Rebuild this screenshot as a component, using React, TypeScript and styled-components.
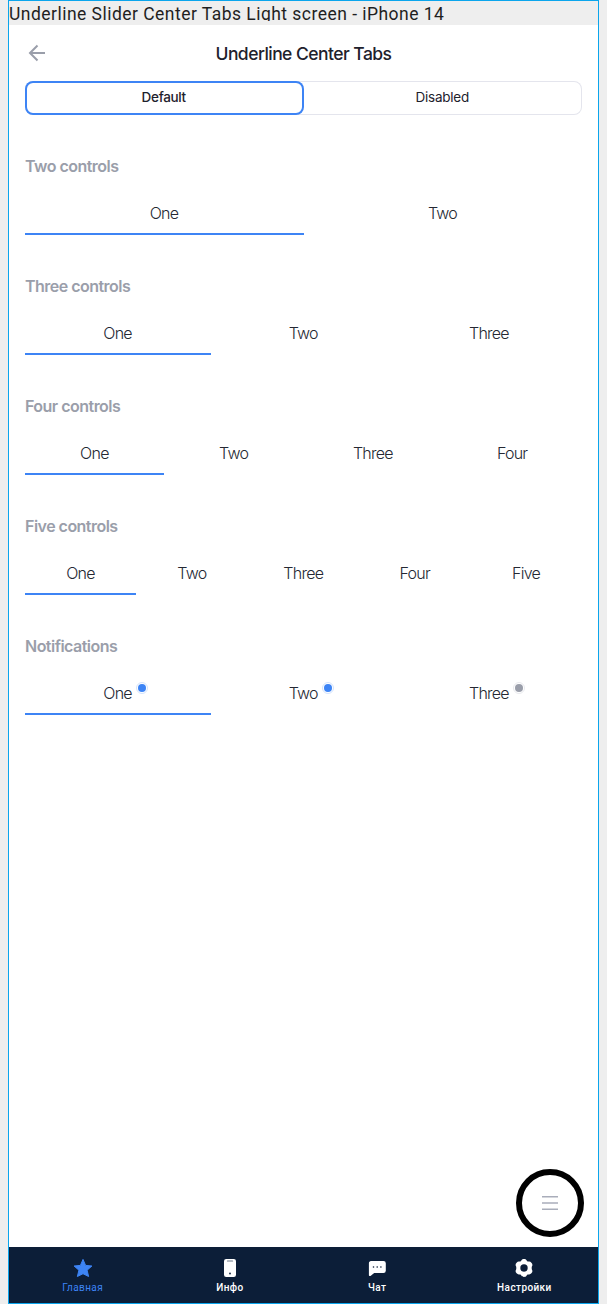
import React from "react";
import styled, { createGlobalStyle } from "styled-components";

const GlobalStyle = createGlobalStyle`
  *, *::before, *::after { box-sizing: border-box; }
  body { margin: 0; background: #eeeeee; font-family: Inter, "Liberation Sans", sans-serif; }
`;

const Canvas = styled.div`
  height: 1304px;
  padding-left: 8px;
  background: #eeeeee;
`;

const Frame = styled.div`
  position: relative;
  display: flex;
  flex-direction: column;
  width: 591px;
  height: 1304px;
  border: 1px solid #0ba5ec;
  background: #fff;
`;

const FrameTitle = styled.div`
  height: 24px;
  background: #eeeeee;
  color: #1f1f1f;
  overflow: hidden;
`;

const FrameTitleText = styled.div`
  height: 20px;
  overflow: hidden;
  font: 400 17.5px/26px Roboto, sans-serif;
  letter-spacing: 0.47px;
  white-space: nowrap;
`;

const Header = styled.header`
  display: grid;
  grid-template-columns: 24px 1fr 24px;
  align-items: center;
  height: 56px;
  padding: 0 16px;
`;

const Heading = styled.h1`
  margin: 1px 0 0;
  text-align: center;
  color: #1e212c;
  font-size: 17.5px;
  line-height: 23px;
  font-weight: 500;
  letter-spacing: -0.54px;
`;

const Segments = styled.div`
  display: grid;
  grid-template-columns: 1fr 1fr;
  height: 34px;
  margin: 0 16px;
  border-radius: 8px;
  box-shadow: inset 0 0 0 1px #e4e5ed;
`;

const Segment = styled.div<{ $active?: boolean }>`
  display: flex;
  align-items: center;
  justify-content: center;
  padding: 0 1px 2px 0;
  border-radius: 8px;
  box-shadow: ${(p) => (p.$active ? "inset 0 0 0 2px #3d84f5" : "none")};
  color: #1e212c;
  font-size: 13.5px;
  font-weight: ${(p) => (p.$active ? 500 : 400)};
  letter-spacing: ${(p) => (p.$active ? "-0.32px" : "-0.25px")};
`;

const Content = styled.main`
  flex: 1;
  padding: 39px 16px 0;
`;

const Section = styled.section`
  height: 120px;
`;

const SectionTitle = styled.h2`
  margin: 0;
  color: #9a9eaa;
  font-size: 16px;
  line-height: 24px;
  font-weight: 600;
  letter-spacing: -0.52px;
`;

const Tabs = styled.div`
  display: flex;
  margin-top: 12px;
`;

const Tab = styled.div<{ $active?: boolean }>`
  display: flex;
  flex: 1 1 0;
  justify-content: center;
  height: 45px;
  padding: 11px 0.5px 0 0;
  border-bottom: 2px solid ${(p) => (p.$active ? "#3d84f5" : "transparent")};
  color: #252833;
  font-size: 16px;
  line-height: 24px;
  font-weight: 300;
  letter-spacing: -0.75px;
`;

const TabLabel = styled.span`
  position: relative;
`;

const Dot = styled.span<{ $color: string; $ring: string }>`
  position: absolute;
  left: calc(100% + 4px);
  top: 1px;
  width: 12px;
  height: 12px;
  padding: 1px;
  border: 1px solid ${(p) => p.$ring};
  border-radius: 50%;

  &::before {
    content: "";
    display: block;
    width: 8px;
    height: 8px;
    border-radius: 50%;
    background: ${(p) => p.$color};
  }
`;

const MenuButton = styled.button`
  position: absolute;
  right: 14px;
  bottom: 66px;
  display: flex;
  align-items: center;
  justify-content: center;
  width: 68px;
  height: 68px;
  padding: 0;
  border: 6px solid #000;
  border-radius: 50%;
  background: #fff;
`;

const Nav = styled.nav`
  display: grid;
  grid-template-columns: repeat(4, 1fr);
  height: 56px;
  background: #0c1e38;
`;

const NavItem = styled.div<{ $active?: boolean }>`
  display: flex;
  flex-direction: column;
  align-items: center;
  padding-top: 9px;
  color: ${(p) => (p.$active ? "#3d84f5" : "#fff")};
  svg { display: block; }
`;

const NavLabel = styled.span<{ $active?: boolean }>`
  margin-top: 1px;
  font: ${(p) => (p.$active ? 400 : 500)} 10px/14px Roboto, sans-serif;
  letter-spacing: 0.4px;
`;

const BackIcon = () => (
  <svg width="24" height="24" viewBox="0 0 24 24" fill="none" stroke="#9a9eaa" strokeWidth="2">
    <path d="M20 12H5M12.5 4.5L5 12l7.5 7.5" />
  </svg>
);

const MenuIcon = () => (
  <svg width="16" height="16" viewBox="0 0 16 16" stroke="#a9adba" strokeWidth="1.4">
    <path d="M0 1.7h16M0 8h16M0 14.2h16" />
  </svg>
);

const StarIcon = () => (
  <svg width="24" height="24" viewBox="0 0 24 24" fill="currentColor" stroke="currentColor" strokeWidth="1" strokeLinejoin="round">
    <path d="M12 3.400l2.600 6 6.300.6-4.800 4.200 1.500 6.300L12 17.700l-5.600 2.800 1.500-6.300L3.100 10l6.300-.6z" />
  </svg>
);

const PhoneIcon = () => (
  <svg width="24" height="24" viewBox="0 0 24 24">
    <rect x="6" y="3" width="12" height="18" rx="2.2" fill="currentColor" />
    <path d="M9.500 5h5" stroke="#0c1e38" strokeOpacity=".6" strokeWidth="1.2" strokeLinecap="round" />
    <circle cx="12" cy="17.500" r=".9" fill="#0c1e38" />
  </svg>
);

const ChatIcon = () => (
  <svg width="24" height="24" viewBox="0 0 24 24">
    <path d="M6 5h12.500a2.300 2.300 0 0 1 2.300 2.300v7.500a2.300 2.300 0 0 1-2.300 2.200H9.200l-3.400 2.700c-.9.700-1.900.3-1.900-.7V7.200C3.900 6 4.800 5 6 5z" fill="currentColor" />
    <g fill="#0c1e38">
      <circle cx="8.500" cy="11" r=".8" />
      <circle cx="12.200" cy="11" r=".8" />
      <circle cx="15.900" cy="11" r=".8" />
    </g>
  </svg>
);

const GearIcon = () => (
  <svg width="24" height="24" viewBox="0 0 24 24">
    <path
      d="M9.500 4.200C10.200 2.600 13.800 2.600 14.500 4.200C15 5.400 15.700 5.700 17 5.500C18.900 5.300 21.200 8.300 20.200 9.800C19.500 11 19.500 13 20.200 14.200C21.200 15.700 18.900 18.700 17 18.500C15.700 18.300 15 18.600 14.500 19.800C13.800 21.400 10.200 21.400 9.500 19.800C9 18.600 8.300 18.300 7 18.500C5.100 18.700 2.800 15.700 3.800 14.200C4.500 13 4.500 11 3.800 9.800C2.800 8.300 5.100 5.300 7 5.500C8.300 5.700 9 5.400 9.500 4.200Z"
      fill="currentColor"
    />
    <circle cx="12" cy="12" r="3.700" fill="#0c1e38" />
  </svg>
);

type Notice = "new" | "muted";

const sections: { title: string; tabs: string[]; notices?: Notice[] }[] = [
  { title: "Two controls", tabs: ["One", "Two"] },
  { title: "Three controls", tabs: ["One", "Two", "Three"] },
  { title: "Four controls", tabs: ["One", "Two", "Three", "Four"] },
  { title: "Five controls", tabs: ["One", "Two", "Three", "Four", "Five"] },
  { title: "Notifications", tabs: ["One", "Two", "Three"], notices: ["new", "new", "muted"] },
];

const navItems = [
  { label: "Главная", Icon: StarIcon },
  { label: "Инфо", Icon: PhoneIcon },
  { label: "Чат", Icon: ChatIcon },
  { label: "Настройки", Icon: GearIcon },
];

export default function App() {
  return (
    <Canvas>
      <GlobalStyle />
      <Frame>
        <FrameTitle>
          <FrameTitleText>Underline Slider Center Tabs Light screen - iPhone 14</FrameTitleText>
        </FrameTitle>
        <Header>
          <BackIcon />
          <Heading>Underline Center Tabs</Heading>
        </Header>
        <Segments>
          <Segment $active>Default</Segment>
          <Segment>Disabled</Segment>
        </Segments>
        <Content>
          {sections.map(({ title, tabs, notices }) => (
            <Section key={title}>
              <SectionTitle>{title}</SectionTitle>
              <Tabs>
                {tabs.map((tab, i) => (
                  <Tab key={tab} $active={i === 0}>
                    <TabLabel>
                      {tab}
                      {notices && (
                        <Dot
                          $color={notices[i] === "new" ? "#3d84f5" : "#9a9eaa"}
                          $ring={notices[i] === "new" ? "#d3e3fd" : "#e9eaee"}
                        />
                      )}
                    </TabLabel>
                  </Tab>
                ))}
              </Tabs>
            </Section>
          ))}
        </Content>
        <MenuButton aria-label="Menu">
          <MenuIcon />
        </MenuButton>
        <Nav>
          {navItems.map(({ label, Icon }, i) => (
            <NavItem key={label} $active={i === 0}>
              <Icon />
              <NavLabel $active={i === 0}>{label}</NavLabel>
            </NavItem>
          ))}
        </Nav>
      </Frame>
    </Canvas>
  );
}
